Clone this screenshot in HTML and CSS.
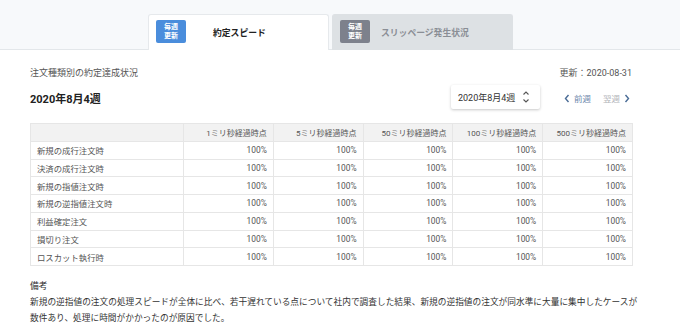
FILE: index.html
```html
<!DOCTYPE html>
<html lang="ja">
<head>
<meta charset="utf-8">
<link rel="stylesheet" href="styles.css">
</head>
<body>
<header class="tabs-bar">
  <div class="tabs">
    <div class="tab tab-active">
      <span class="badge badge-blue">毎週<br>更新</span>
      <span class="tab-label">約定スピード</span>
    </div>
    <div class="tab tab-inactive">
      <span class="badge badge-gray">毎週<br>更新</span>
      <span class="tab-label">スリッページ発生状況</span>
    </div>
  </div>
</header>
<main class="content">
  <div class="meta-row">
    <span class="subtitle">注文種類別の約定達成状況</span>
    <span class="updated">更新：2020-08-31</span>
  </div>
  <div class="week-row">
    <h2 class="week-title">2020年8月4週</h2>
    <div class="controls">
      <div class="select">
        <span>2020年8月4週</span>
        <svg class="select-icon" width="8" height="14" viewBox="0 0 8 14"><path d="M1.5 4.5 L4 2 L6.5 4.5 M1.5 9.5 L4 12 L6.5 9.5" fill="none" stroke="#555" stroke-width="1.1"/></svg>
      </div>
      <div class="nav">
        <span class="nav-prev"><svg width="6" height="9" viewBox="0 0 6 9"><path d="M4.5 1 L1.5 4.5 L4.5 8" fill="none" stroke="#4a6c96" stroke-width="1.4"/></svg>前週</span>
        <span class="nav-next">翌週<svg width="6" height="9" viewBox="0 0 6 9"><path d="M1.5 1 L4.5 4.5 L1.5 8" fill="none" stroke="#4a6c96" stroke-width="1.4"/></svg></span>
      </div>
    </div>
  </div>
  <table class="data">
    <thead>
      <tr><th class="c-name"></th><th>1ミリ秒経過時点</th><th>5ミリ秒経過時点</th><th>50ミリ秒経過時点</th><th>100ミリ秒経過時点</th><th>500ミリ秒経過時点</th></tr>
    </thead>
    <tbody>
      <tr><td class="c-name">新規の成行注文時</td><td>100%</td><td>100%</td><td>100%</td><td>100%</td><td>100%</td></tr>
      <tr><td class="c-name">決済の成行注文時</td><td>100%</td><td>100%</td><td>100%</td><td>100%</td><td>100%</td></tr>
      <tr><td class="c-name">新規の指値注文時</td><td>100%</td><td>100%</td><td>100%</td><td>100%</td><td>100%</td></tr>
      <tr><td class="c-name">新規の逆指値注文時</td><td>100%</td><td>100%</td><td>100%</td><td>100%</td><td>100%</td></tr>
      <tr><td class="c-name">利益確定注文</td><td>100%</td><td>100%</td><td>100%</td><td>100%</td><td>100%</td></tr>
      <tr><td class="c-name">損切り注文</td><td>100%</td><td>100%</td><td>100%</td><td>100%</td><td>100%</td></tr>
      <tr><td class="c-name">ロスカット執行時</td><td>100%</td><td>100%</td><td>100%</td><td>100%</td><td>100%</td></tr>
    </tbody>
  </table>
  <div class="notes">
    <p class="notes-title">備考</p>
    <p class="notes-body">新規の逆指値の注文の処理スピードが全体に比べ、若干遅れている点について社内で調査した結果、新規の逆指値の注文が同水準に大量に集中したケースが数件あり、処理に時間がかかったのが原因でした。</p>
  </div>
</main>
</body>
</html>
```
FILE: styles.css
```css
* { box-sizing: border-box; }
body {
  margin: 0;
  background: #fff;
  font-family: Roboto, "Noto Sans CJK JP", sans-serif;
  color: #333;
}
.tabs-bar {
  background: #f7f9fb;
  height: 50px;
  border-bottom: 1px solid #e3e7ea;
  padding: 14px 0 0 148px;
}
.tabs {
  display: flex;
  gap: 3px;
  height: 36px;
}
.tab {
  width: 181px;
  height: 36px;
  display: flex;
  align-items: center;
  padding-left: 7px;
  border-radius: 3px 3px 0 0;
  border: 1px solid #e6e9ec;
  border-bottom: none;
}
.tab-active { background: #fff; }
.tab-inactive { background: #dde1e4; border-color: #dde1e4; }
.badge {
  width: 30px;
  height: 23px;
  border-radius: 2px;
  color: #fff;
  font-size: 7px;
  line-height: 9px;
  font-weight: 700;
  display: flex;
  align-items: center;
  justify-content: center;
  text-align: center;
  margin-bottom: 2px;
}
.badge-blue { background: #4a8ddc; }
.badge-gray { background: #7d818c; }
.tab-label {
  font-size: 8.8px;
  font-weight: 700;
}
.tab-active .tab-label { margin-left: 27px; color: #222; }
.tab-inactive .tab-label { margin-left: 11px; color: #8a8e95; }
.content {
  padding: 17px 48px 0 30px;
}
.meta-row {
  display: flex;
  justify-content: space-between;
  font-size: 9px;
  color: #555;
  line-height: 12px;
}
.week-row {
  display: flex;
  justify-content: space-between;
  align-items: flex-start;
  margin-top: 6px;
}
.week-title {
  margin: 5px 0 0;
  font-size: 11px;
  font-weight: 700;
  color: #222;
}
.controls {
  display: flex;
  align-items: center;
  gap: 24px;
  margin-right: 2px;
}
.select {
  width: 89px;
  height: 24px;
  background: #fff;
  box-shadow: 0 1px 3px rgba(0,0,0,0.22);
  border-radius: 2px;
  display: flex;
  align-items: center;
  justify-content: space-between;
  padding: 0 10px 0 7px;
  font-size: 9px;
  color: #333;
}
.select-icon { display: block; }
.nav {
  display: flex;
  gap: 12px;
  font-size: 8.5px;
  margin-top: 2px;
}
.nav span { display: flex; align-items: center; gap: 4px; }
.nav-prev { color: #6a86ab; }
.nav-next { color: #b0b3b8; }
.data {
  margin-top: 14px;
  width: 603px;
  border-collapse: collapse;
  color: #555;
  table-layout: fixed;
}
.data th, .data td {
  border: 1px solid #e6e6e6;
  height: 17.75px;
  padding: 0 6px;
  text-align: right;
  font-weight: 400;
  font-size: 8.4px;
}
.data th { background: #f2f2f2; font-size: 8px; }
.data th.c-name { width: 153px; }
.data td.c-name { text-align: left; }
.notes { margin-top: 12px; margin-right: -10px; }
.notes p { margin: 0; }
.notes-title { font-size: 8.7px; line-height: 16px; color: #333; }
.notes-body { font-size: 8.7px; line-height: 16px; color: #333; }
```
